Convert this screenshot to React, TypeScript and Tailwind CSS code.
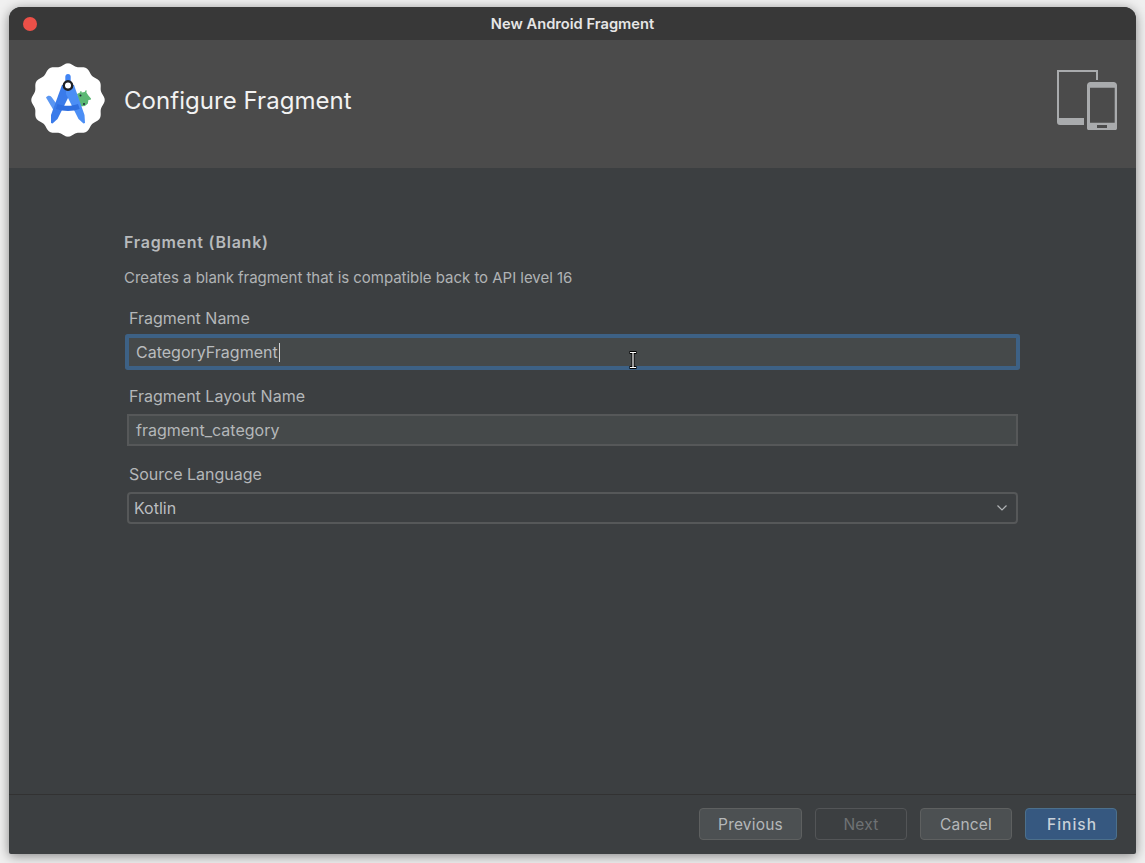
const font = "font-['Inter',sans-serif]"

function AndroidStudioLogo() {
  // scalloped badge with the compass and little android
  const points: string[] = []
  for (let i = 0; i < 240; i++) {
    const a = (i / 240) * Math.PI * 2
    const r = 35.4 + 1.3 * Math.cos(a * 12)
    points.push(`${(37 + r * Math.sin(a)).toFixed(2)},${(37 - r * Math.cos(a)).toFixed(2)}`)
  }
  return (
    <svg width="74" height="74" viewBox="0 0 74 74" className="shrink-0">
      <polygon points={points.join(" ")} fill="#ffffff" />
      {/* android peeking out behind the right leg */}
      <path d="M46 31l3-1.500.5-1.500 1 .3.2 1.200 3-.5 1-1.800 1 .4-.3 2 2 3 2.600 3-.3 1.200-2.300.3-.5 3.500-3 2.500-5 .5z" fill="#5bb974" />
      <circle cx="49.500" cy="32.500" r="1" fill="#1f2937" />
      <circle cx="53" cy="41" r="1" fill="#1f2937" />
      {/* short arm on the left */}
      <path d="M15 34.500c1.500-2 4-2.200 5.500-.5l7 9.500-3 7z" fill="#5a96f2" />
      {/* top pin */}
      <path d="M37 11c1.700 0 2.700 1.200 2.700 2.800V20h-5.400v-6.200c0-1.600 1-2.800 2.700-2.800z" fill="#4285f4" />
      {/* legs */}
      <path d="M31 22h8l1 7-13.500 27-5 4.500-1.500-.5V52z" fill="#3a7bea" />
      <path d="M35 22h8l10.500 30 .5 8-1.500.5-5-4.500L35 31z" fill="#4b8ef5" />
      {/* cross bar */}
      <path d="M26.500 41c6.500 2.400 14 2.400 20.500 0l1.800 5c-7 2.500-16.500 2.500-24 0z" fill="#2f6fe0" />
      <circle cx="37" cy="22.500" r="4.200" fill="#ffffff" stroke="#202124" strokeWidth="2.400" />
    </svg>
  )
}

function DevicesIcon() {
  return (
    <svg width="60" height="60" viewBox="0 0 60 60" fill="none" className="shrink-0">
      <path d="M0 0h41v10h-2V2H2v46h25v7H3c-2 0-3-1-3-3z" fill="#a9abad" />
      <path
        fillRule="evenodd"
        clipRule="evenodd"
        d="M33.500 12h23c2 0 3.500 1.500 3.500 3.500V58c0 1.500-.5 2-2 2H32c-1.500 0-2-.5-2-2V15.500c0-2 1.500-3.500 3.500-3.500zM33 17.700v35h24.700v-35zM40 55v3h10v-3z"
        fill="#a9abad"
      />
    </svg>
  )
}

function Field({ label, children }: { label: string; children: React.ReactNode }) {
  return (
    <div className="flex flex-col">
      <label className="mb-[8px] pl-[5px] text-[16px] leading-[20px] text-[#b4b7b9]">{label}</label>
      {children}
    </div>
  )
}

function Button({ label, kind = "normal", wide }: { label: string; kind?: "normal" | "disabled" | "primary"; wide?: boolean }) {
  const styles = {
    normal: "bg-[#4c5052] border-[#5e6060] text-[#b4b7b9] tracking-[0.2px]",
    disabled: "bg-[#3c3f41] border-[#535557] text-[#6f7274] tracking-[0.2px]",
    primary: "bg-[#365880] border-[#4c708c] text-[#c9d1d9] tracking-[1px] font-medium pl-[2px]",
  }
  return (
    <button className={`h-[32px] ${wide ? "w-[103px]" : "w-[92px]"} rounded-[4px] border pt-[2px] text-[15.5px] ${styles[kind]}`}>
      {label}
    </button>
  )
}

export default function App() {
  return (
    <div className={`${font} relative h-[863px] w-[1145px] overflow-hidden bg-[#f0f0f0] pb-[9px] pl-[9px] pr-[9px] pt-[7px]`}>
      <div className="flex h-full flex-col overflow-hidden rounded-t-[12px] rounded-b-[2px] bg-[#3c3f41] shadow-[0_2px_12px_rgba(0,0,0,0.45)]">
        {/* title bar */}
        <div className="relative flex h-[33px] shrink-0 items-center justify-center bg-[#383838] pt-[1px]">
          <span className="absolute left-[14px] top-[10px] h-[14px] w-[14px] rounded-full bg-[#ec5048]" />
          <span className="text-[14.7px] font-semibold text-[#e6e6e6]">New Android Fragment</span>
        </div>

        {/* banner */}
        <div className="flex h-[128px] shrink-0 items-center justify-between bg-[#4b4b4b] pb-[8px] pl-[22px] pr-[19px]">
          <div className="flex items-center gap-[19px]">
            <AndroidStudioLogo />
            <span className="pt-[2px] text-[24px] tracking-[0.05px] text-[#f2f2f2]">Configure Fragment</span>
          </div>
          <DevicesIcon />
        </div>

        {/* form */}
        <div className="flex flex-1 flex-col pl-[115px] pr-[118px] pt-[64px]">
          <h1 className="text-[16px] font-semibold leading-[20px] tracking-[0.75px] text-[#b7babc]">Fragment (Blank)</h1>
          <p className="mt-[16px] text-[15px] leading-[20px] tracking-[-0.03px] text-[#b0b3b5]">
            Creates a blank fragment that is compatible back to API level 16
          </p>
          <div className="mt-[20px] flex flex-col gap-[18px]">
            <Field label="Fragment Name">
              <div className="ml-[3px] flex h-[32px] items-center rounded-[1px] border-2 border-[#3d6185] bg-[#45494a] pl-[7px] text-[16px] text-[#b9bcbe] shadow-[0_0_0_2px_#3d6185]">
                CategoryFragment
                <span className="ml-[1px] h-[19px] w-px bg-[#d0d3d5]" />
              </div>
            </Field>
            <Field label="Fragment Layout Name">
              <div className="ml-[3px] flex h-[32px] items-center border-2 border-[#565859] bg-[#45494a] pl-[7px] text-[16px] text-[#b4b7b9]">
                fragment_category
              </div>
            </Field>
            <Field label="Source Language">
              <div className="ml-[3px] flex h-[32px] items-center justify-between rounded-[4px] border-2 border-[#565859] bg-[#3c3f41] pl-[5px] pr-[9px] text-[16px] text-[#bbbec0]">
                Kotlin
                <svg width="10" height="6" viewBox="0 0 10 6" fill="none" stroke="#b0b3b5" strokeWidth="1.2">
                  <path d="M.5.500L5 5 9.500.5" />
                </svg>
              </div>
            </Field>
          </div>
        </div>

        {/* footer */}
        <div className="flex h-[60px] shrink-0 items-start justify-end gap-[13px] border-t border-[#323232] pr-[19px] pt-[13px]">
          <Button label="Previous" wide />
          <Button label="Next" kind="disabled" />
          <Button label="Cancel" />
          <Button label="Finish" kind="primary" />
        </div>
      </div>

      {/* mouse pointer */}
      <svg width="10" height="18" viewBox="0 0 10 18" className="absolute left-[628px] top-[351px]">
        <path d="M1.500 1.500h7M1.500 16.500h7M5 1.500v15" stroke="#000" strokeWidth="3" fill="none" />
        <path d="M2 1.500h6M2 16.500h6M5 1.500v15" stroke="#fff" strokeWidth="1.200" fill="none" />
      </svg>
    </div>
  )
}
